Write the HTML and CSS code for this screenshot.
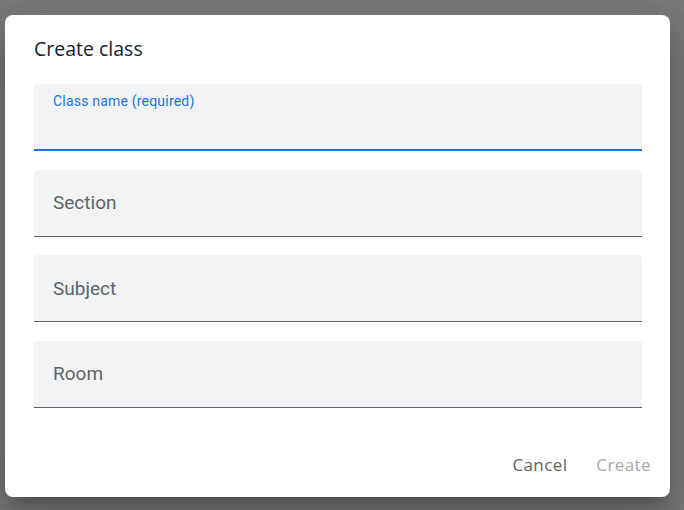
FILE: index.html
```html
<!DOCTYPE html>
<html>
<head>
<meta charset="utf-8">
<link rel="stylesheet" href="styles.css">
</head>
<body>
<div class="dialog">
  <h2 class="title">Create class</h2>
  <div class="fields">
    <div class="field focused">
      <span class="label">Class name (required)</span>
    </div>
    <div class="field">
      <span class="placeholder">Section</span>
    </div>
    <div class="field">
      <span class="placeholder">Subject</span>
    </div>
    <div class="field">
      <span class="placeholder">Room</span>
    </div>
  </div>
  <div class="actions">
    <button class="btn cancel">Cancel</button>
    <button class="btn create">Create</button>
  </div>
</div>
</body>
</html>
```
FILE: styles.css
```css
html, body {
  margin: 0;
  padding: 0;
}
body {
  background: #7a7a7a;
  width: 684px;
  height: 510px;
  overflow: hidden;
  font-family: Roboto, "Liberation Sans", sans-serif;
}
.dialog {
  box-sizing: border-box;
  margin: 15px 0 0 5px;
  width: 665px;
  height: 482px;
  background: #fff;
  border-radius: 8px;
  box-shadow: 0 11px 15px -7px rgba(0,0,0,.2), 0 24px 38px 3px rgba(0,0,0,.14), 0 9px 46px 8px rgba(0,0,0,.12);
  padding: 24px 0 0 29px;
  display: flex;
  flex-direction: column;
}
.title {
  margin: 0;
  font-family: "Open Sans", Roboto, sans-serif;
  font-size: 19.5px;
  font-weight: 500;
  line-height: 20px;
  color: #202124;
}
.fields {
  margin-top: 25px;
  width: 608px;
  display: flex;
  flex-direction: column;
  gap: 18.67px;
}
.field {
  box-sizing: border-box;
  height: 67px;
  background: #f1f3f4;
  border-radius: 4px 4px 0 0;
  border-bottom: 1px solid #5f6368;
  padding: 0 0 0 19px;
  display: flex;
  align-items: center;
}
.field.focused {
  border-bottom: 2px solid #1a73e8;
  align-items: flex-start;
}
.label {
  margin-top: 9px;
  font-size: 14px;
  letter-spacing: 0.2px;
  line-height: 16px;
  color: #1a73e8;
}
.placeholder {
  font-size: 19px;
  color: #5f6368;
}
.actions {
  margin-top: 39px;
  display: flex;
  justify-content: flex-end;
  gap: 13px;
  padding-right: 11px;
}
.btn {
  border: none;
  background: none;
  height: 36px;
  padding: 0 8px;
  font-family: "Open Sans", Roboto, sans-serif;
  font-size: 17px;
  letter-spacing: 0.4px;
  font-weight: 500;
}
.cancel { color: #5f6368; }
.create { color: #a8a9ab; }
```
